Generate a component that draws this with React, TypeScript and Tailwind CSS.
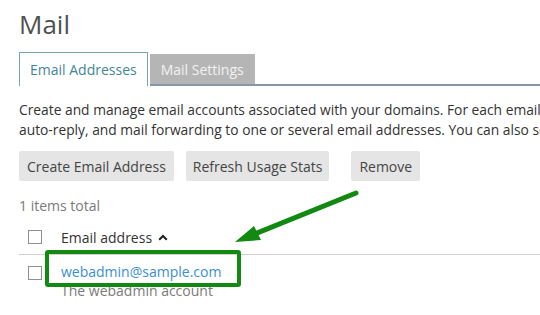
import React from "react";

function Checkbox() {
  return <div className="w-[14px] h-[14px] border border-[#8f8f8f] bg-white shrink-0" />;
}

export default function App() {
  return (
    <div
      className="relative w-[540px] h-[315px] overflow-hidden bg-white text-[#333]"
      style={{ fontFamily: '"Open Sans", "Noto Sans", sans-serif' }}
    >
      <div className="pl-[19px]">
        <h1 className="pt-[8px] text-[26px] leading-[32px] text-[#505050] font-normal">Mail</h1>

        <div className="mt-[12px] flex items-end">
          <div className="h-[34px] px-[10px] flex items-center border border-b-0 border-[#7aa3b0] bg-white text-[14px] text-[#3f8697]">
            Email Addresses
          </div>
          <div className="ml-[2px] h-[32px] px-[11px] flex items-center bg-[#b5b5b5] text-[14px] text-[#f2f2f2] border-b-2 border-[#8497ab]">
            Mail Settings
          </div>
          <div className="flex-1 h-[2px] bg-[#8497ab]" />
        </div>

        <div className="mt-[14px] text-[13.8px] leading-[20px] whitespace-nowrap text-[#333]">
          <div>Create and manage email accounts associated with your domains. For each email account, you can set up</div>
          <div>auto-reply, and mail forwarding to one or several email addresses. You can also set up spam filtering.</div>
        </div>

        <div className="mt-[11px] flex text-[14px] text-[#444]">
          <div className="h-[30px] px-[8px] flex items-center bg-[#e5e5e5] rounded-[2px]">Create Email Address</div>
          <div className="ml-[12px] h-[30px] px-[7px] flex items-center bg-[#e5e5e5] rounded-[2px]">Refresh Usage Stats</div>
          <div className="ml-[22px] h-[30px] px-[8px] flex items-center bg-[#e5e5e5] rounded-[2px]">Remove</div>
        </div>

        <div className="mt-[15px] text-[14px] leading-[20px] text-[#7a7a7a]">1 items total</div>

        <div className="mt-[4px] h-[35px] flex items-center border-b border-[#d2d2d2]">
          <div className="ml-[9px]"><Checkbox /></div>
          <div className="ml-[19px] flex items-center gap-[6px] text-[14px] text-[#333]">
            <span>Email address</span>
            <svg width="10" height="7" viewBox="0 0 10 7">
              <path d="M1.2 5.8 L5 2 L8.8 5.8" fill="none" stroke="#222" strokeWidth="2" />
            </svg>
          </div>
        </div>

        <div className="mt-[8px] flex items-start">
          <div className="ml-[9px] mt-[3px]"><Checkbox /></div>
          <div className="ml-[19px]">
            <div className="text-[14px] leading-[17px] text-[#3a8fd0]">webadmin@sample.com</div>
            <div className="mt-[2px] text-[14px] leading-[17px] text-[#7a7a7a]">The webadmin account</div>
          </div>
        </div>
      </div>

      <div className="absolute left-[45px] top-[250px] w-[196px] h-[37px] border-[4px] border-[#128a12] rounded-[3px]" />

      <svg className="absolute left-0 top-0" width="540" height="315" viewBox="0 0 540 315">
        <line x1="356" y1="193" x2="252" y2="235" stroke="#128a12" strokeWidth="5" strokeLinecap="round" />
        <polygon points="235,242 254,226 261,240" fill="#128a12" />
      </svg>
    </div>
  );
}
